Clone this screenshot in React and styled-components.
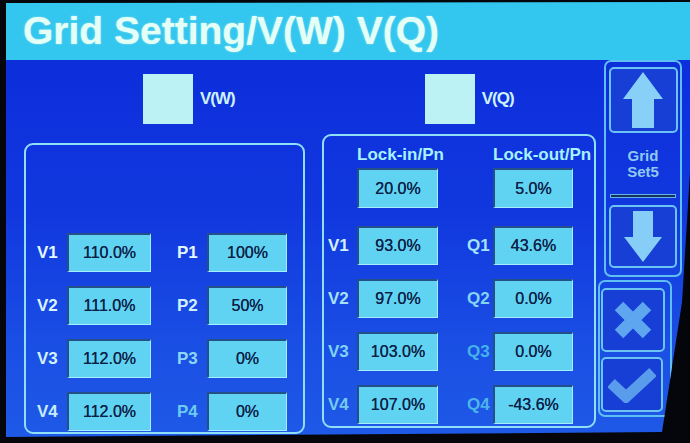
import React from "react";
import styled, { createGlobalStyle } from "styled-components";

const GlobalStyle = createGlobalStyle`
  html, body {
    margin: 0;
    padding: 0;
    background: #04060b;
  }
  body {
    font-family: "Liberation Sans", Arial, sans-serif;
  }
`;

const Frame = styled.div`
  width: 690px;
  height: 443px;
  box-sizing: border-box;
  padding: 2px 0 0 6px;
  background: #04060b;
  overflow: hidden;
`;

const Screen = styled.div`
  width: 684px;
  height: 441px;
  display: flex;
  flex-direction: column;
  clip-path: polygon(0 1px, 684px 0, 684px 170px, 676px 300px, 656px 430px, 0 435px);
`;

const TitleBar = styled.div`
  height: 58px;
  flex-shrink: 0;
  background: #33c6ef;
  color: #e4fff6;
  font-size: 39px;
  font-weight: bold;
  line-height: 58px;
  padding-left: 17px;
  white-space: nowrap;
  text-shadow: 0 0 2px rgba(230, 255, 245, 0.6);
`;

const Body = styled.div`
  flex: 1;
  display: flex;
  background: linear-gradient(180deg, #0c2edb 0%, #1138df 40%, #1a4fe4 75%, #1f5ae7 100%);
`;

const Main = styled.div`
  width: 592px;
  display: flex;
  flex-direction: column;
`;

const CheckRow = styled.div`
  display: flex;
  align-items: center;
  padding: 14px 0 0 137px;
  height: 50px;
`;

const CheckGroup = styled.div`
  display: flex;
  align-items: center;
  gap: 7px;
  margin-left: ${(p) => p.$offset || 0}px;
`;

const CheckBox = styled.div`
  width: 50px;
  height: 50px;
  background: #bdf2f5;
`;

const CheckLabel = styled.span`
  color: #cdf2fb;
  font-size: 17px;
  font-weight: bold;
  letter-spacing: -1px;
`;

const Panels = styled.div`
  display: flex;
  align-items: flex-start;
  gap: 17px;
  margin-top: 10px;
  padding-left: 18px;
`;

const Panel = styled.div`
  box-sizing: border-box;
  width: ${(p) => p.$w}px;
  height: ${(p) => p.$h}px;
  margin-top: ${(p) => p.$top || 0}px;
  border: 2px solid #8fe0f6;
  border-radius: 9px;
`;

const LeftPanel = styled(Panel)`
  padding: 88px 0 0 11px;
`;

const RightPanel = styled(Panel)`
  padding: 10px 0 0 4px;
  display: flex;
  flex-direction: column;
`;

const LeftGrid = styled.div`
  display: grid;
  grid-template-columns: 30px 84px 26px 30px 80px;
  grid-auto-rows: 39px;
  row-gap: 14px;
  align-items: center;
`;

const RightGrid = styled.div`
  display: grid;
  grid-template-columns: 29px 81px 29px 26px 80px;
  grid-auto-rows: ${(p) => p.$row}px;
  row-gap: 14px;
  align-items: center;
  margin-top: ${(p) => p.$top || 0}px;
`;

const Label = styled.span`
  color: ${(p) => p.$tone || "#dff4ff"};
  font-size: 17px;
  font-weight: bold;
  white-space: nowrap;
`;

const HeadLabel = styled.span`
  grid-column: ${(p) => p.$col};
  color: #a6f2ff;
  font-size: 17px;
  font-weight: bold;
  line-height: 18px;
  white-space: nowrap;
`;

const Field = styled.div`
  grid-column: ${(p) => p.$col || "auto"};
  box-sizing: border-box;
  height: 100%;
  display: flex;
  align-items: center;
  justify-content: center;
  background: #60d2f2;
  border-top: 2px solid #24508a;
  border-left: 2px solid #24508a;
  border-bottom: 1px solid #a6eeff;
  border-right: 1px solid #a6eeff;
  color: #0b2146;
  font-size: 16px;
  text-shadow: 0 0 0.4px #0b2146;
`;

const Sidebar = styled.div`
  width: 86px;
  display: flex;
  flex-direction: column;
`;

const ButtonGroup = styled.div`
  box-sizing: border-box;
  width: ${(p) => p.$w}px;
  height: ${(p) => p.$h}px;
  margin: ${(p) => p.$margin};
  border: 2px solid #5fbef2;
  border-radius: 7px;
  display: flex;
  flex-direction: column;
  align-items: ${(p) => p.$align || "center"};
  padding: ${(p) => p.$pad};
`;

const KeyButton = styled.div`
  box-sizing: border-box;
  width: ${(p) => p.$w}px;
  height: ${(p) => p.$h}px;
  margin-top: ${(p) => p.$top}px;
  margin-left: ${(p) => p.$left || 0}px;
  border: 2px solid #6cc4f4;
  border-radius: 5px;
  background: #173fd6;
  display: flex;
  align-items: center;
  justify-content: center;
`;

const GroupLabel = styled.div`
  margin-top: 15px;
  color: #8fc9ef;
  font-size: 15px;
  font-weight: bold;
  line-height: 16px;
  text-align: center;
`;

const Separator = styled.div`
  margin-top: 14px;
  width: 64px;
  height: 2px;
  background: #16305e;
  border: 1px solid #66b4e6;
`;

const UpArrow = () => (
  <svg width="40" height="56" viewBox="0 0 40 56">
    <polygon points="20,0 40,27 31,27 31,56 9,56 9,27 0,27" fill="#88d0f8" />
  </svg>
);

const DownArrow = () => (
  <svg width="38" height="51" viewBox="0 0 38 51">
    <polygon points="9,0 29,0 29,26 38,26 19,51 0,26 9,26" fill="#86cef8" />
  </svg>
);

const CrossIcon = () => (
  <svg width="40" height="40" viewBox="0 0 40 40">
    <path d="M6 6 L34 34 M34 6 L6 34" stroke="#5ea6ef" strokeWidth="12" />
  </svg>
);

const CheckIcon = () => (
  <svg width="48" height="36" viewBox="0 0 48 36">
    <polyline points="3,16 18,30 45,5" fill="none" stroke="#5a9cec" strokeWidth="11" strokeLinejoin="miter" />
  </svg>
);

const leftRows = [
  { v: "V1", vv: "110.0%", p: "P1", pv: "100%", vt: "#e2f6ff", pt: "#e2f6ff" },
  { v: "V2", vv: "111.0%", p: "P2", pv: "50%", vt: "#dcf4ff", pt: "#d2f0fc" },
  { v: "V3", vv: "112.0%", p: "P3", pv: "0%", vt: "#d2f0fc", pt: "#8cd8f4" },
  { v: "V4", vv: "112.0%", p: "P4", pv: "0%", vt: "#c6ecfa", pt: "#6ccaf0" },
];

const rightRows = [
  { v: "V1", vv: "93.0%", q: "Q1", qv: "43.6%", vt: "#d4f0fc", qt: "#a4e2f8" },
  { v: "V2", vv: "97.0%", q: "Q2", qv: "0.0%", vt: "#a8e2f8", qt: "#84d4f4" },
  { v: "V3", vv: "103.0%", q: "Q3", qv: "0.0%", vt: "#80d2f2", qt: "#46b2ea" },
  { v: "V4", vv: "107.0%", q: "Q4", qv: "-43.6%", vt: "#74cbf0", qt: "#4cb4ea" },
];

export default function App() {
  return (
    <>
      <GlobalStyle />
      <Frame>
        <Screen>
          <TitleBar>Grid Setting/V(W) V(Q)</TitleBar>
          <Body>
            <Main>
              <CheckRow>
                <CheckGroup>
                  <CheckBox />
                  <CheckLabel>V(W)</CheckLabel>
                </CheckGroup>
                <CheckGroup $offset={190}>
                  <CheckBox />
                  <CheckLabel>V(Q)</CheckLabel>
                </CheckGroup>
              </CheckRow>
              <Panels>
                <LeftPanel $w={281} $h={291} $top={9}>
                  <LeftGrid>
                    {leftRows.map((r) => (
                      <React.Fragment key={r.v}>
                        <Label $tone={r.vt}>{r.v}</Label>
                        <Field>{r.vv}</Field>
                        <span />
                        <Label $tone={r.pt}>{r.p}</Label>
                        <Field>{r.pv}</Field>
                      </React.Fragment>
                    ))}
                  </LeftGrid>
                </LeftPanel>
                <RightPanel $w={274} $h={294}>
                  <RightGrid $row={18}>
                    <HeadLabel $col={2}>Lock-in/Pn</HeadLabel>
                    <HeadLabel $col={5}>Lock-out/Pn</HeadLabel>
                  </RightGrid>
                  <RightGrid $row={40} $top={4}>
                    <Field $col={2}>20.0%</Field>
                    <Field $col={5}>5.0%</Field>
                  </RightGrid>
                  <RightGrid $row={39} $top={18}>
                    {rightRows.map((r) => (
                      <React.Fragment key={r.v}>
                        <Label $tone={r.vt}>{r.v}</Label>
                        <Field>{r.vv}</Field>
                        <span />
                        <Label $tone={r.qt}>{r.q}</Label>
                        <Field>{r.qv}</Field>
                      </React.Fragment>
                    ))}
                  </RightGrid>
                </RightPanel>
              </Panels>
            </Main>
            <Sidebar>
              <ButtonGroup $w={78} $h={217} $margin="0 0 0 6px" $pad="0">
                <KeyButton $w={69} $h={66} $top={5}>
                  <UpArrow />
                </KeyButton>
                <GroupLabel>
                  Grid
                  <br />
                  Set5
                </GroupLabel>
                <Separator />
                <KeyButton $w={68} $h={63} $top={7}>
                  <DownArrow />
                </KeyButton>
              </ButtonGroup>
              <ButtonGroup $w={74} $h={137} $margin="3px 0 0 0" $pad="0 0 0 1px" $align="flex-start">
                <KeyButton $w={64} $h={64} $top={6}>
                  <CrossIcon />
                </KeyButton>
                <KeyButton $w={62} $h={55} $top={5}>
                  <CheckIcon />
                </KeyButton>
              </ButtonGroup>
            </Sidebar>
          </Body>
        </Screen>
      </Frame>
    </>
  );
}
